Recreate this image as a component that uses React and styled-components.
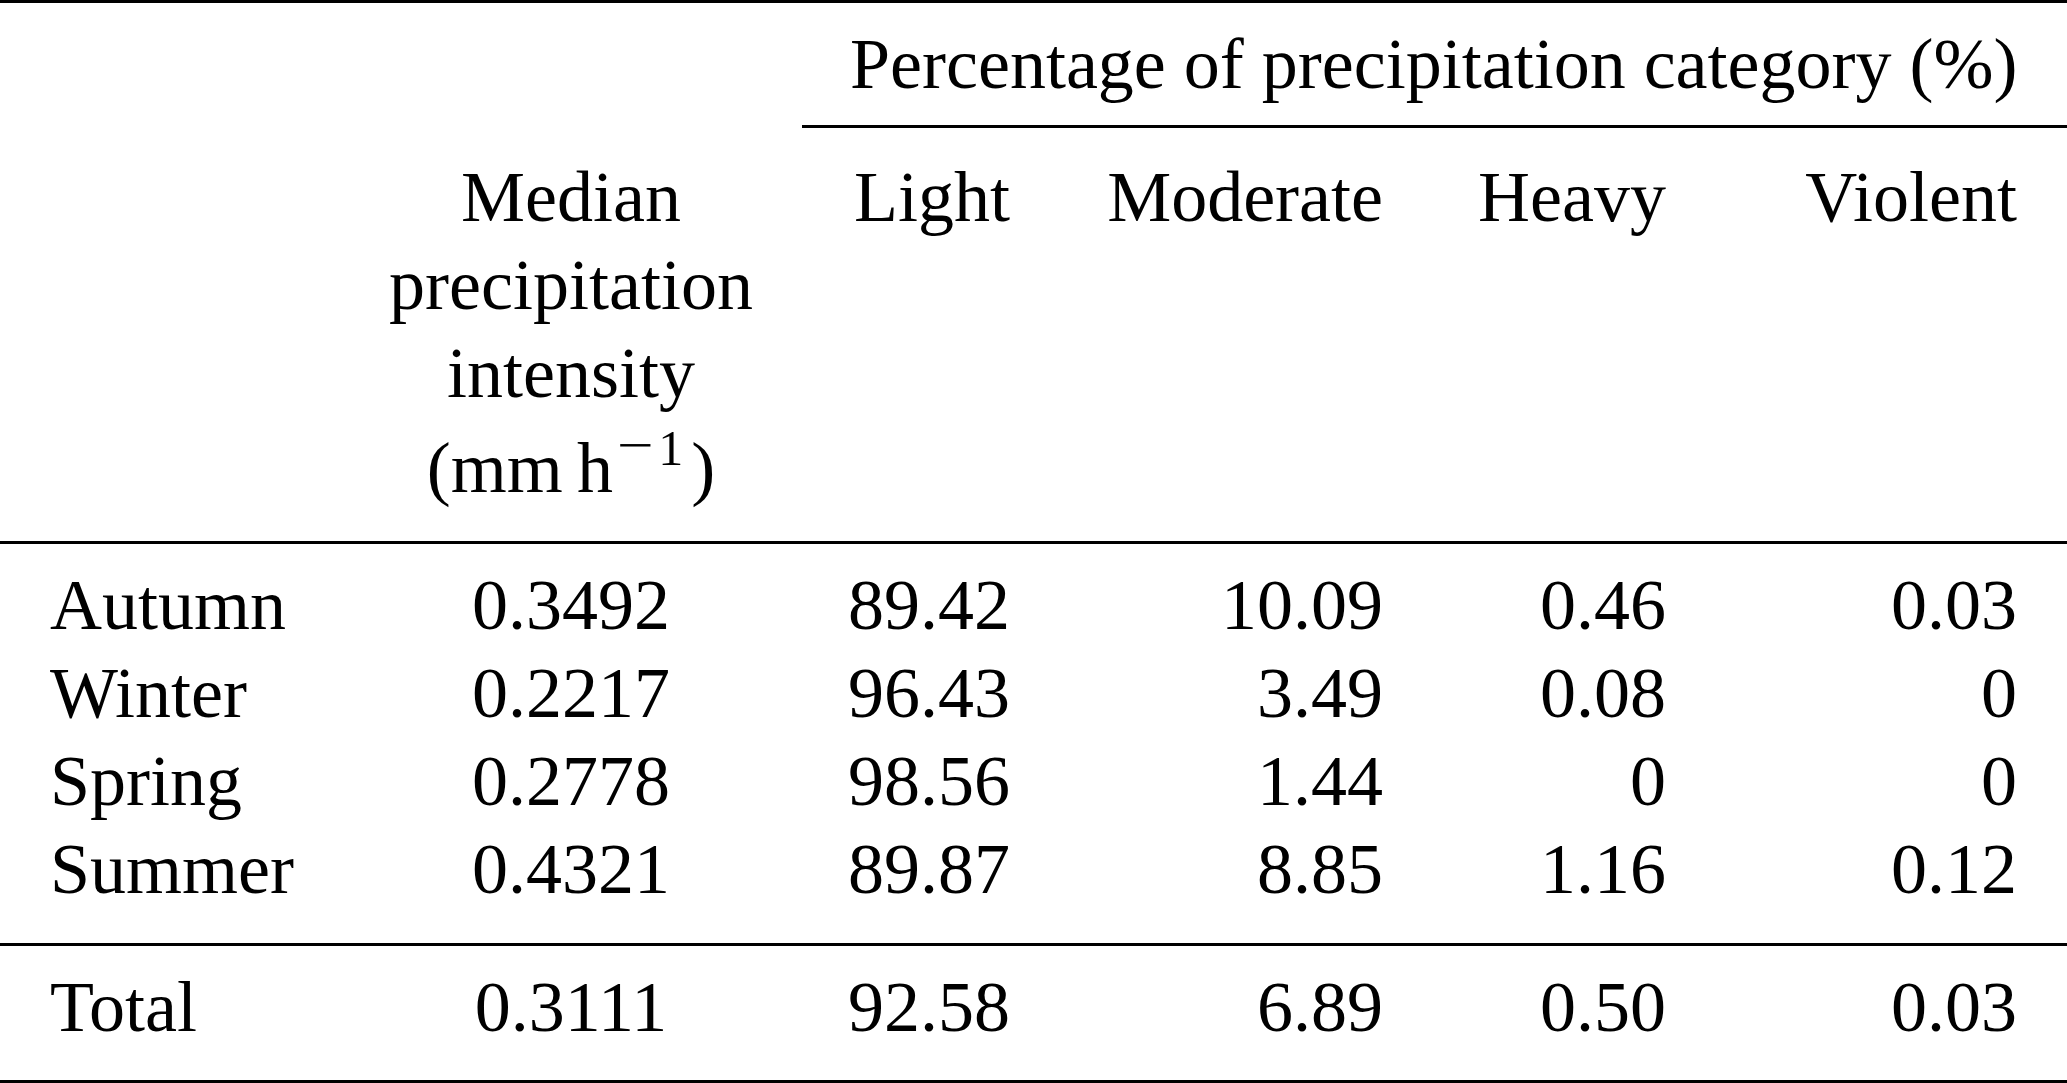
import React from 'react';
import styled, { createGlobalStyle, css } from 'styled-components';

const GlobalStyle = createGlobalStyle`
  html, body {
    margin: 0;
    padding: 0;
    background: #fff;
  }
  body {
    font-family: "Liberation Serif", "Times New Roman", serif;
    color: #000;
  }
`;

const RULE = '3px solid #000';

const Table = styled.table`
  width: 2067px;
  table-layout: fixed;
  border-collapse: separate;
  border-spacing: 0;
  border-top: ${RULE};
  border-bottom: ${RULE};
  font-size: 72px;
  line-height: 88px;
`;

const Col = styled.col`
  width: ${(p) => p.$w}px;
`;

// each row carries its own vertical padding and optional rule underneath
const Row = styled.tr`
  & > th,
  & > td {
    ${(p) => (p.$top ? css`padding-top: ${p.$top}px;` : '')}
    ${(p) => (p.$bottom ? css`padding-bottom: ${p.$bottom}px;` : '')}
    ${(p) => (p.$rule ? css`border-bottom: ${RULE};` : '')}
  }
`;

const Cell = styled.td`
  font-weight: 400;
  white-space: nowrap;
  vertical-align: top;
  padding: 0;
  padding-left: ${(p) => (p.$align === 'left' ? '50px' : '0')};
  padding-right: ${(p) => (p.$align === 'right' ? '50px' : '0')};
  text-align: ${(p) => p.$align || 'center'};
`;

const SpanCell = styled.th`
  font-weight: 400;
  white-space: nowrap;
  text-align: center;
  padding: 17px 50px 17px 48px;
  border-bottom: ${RULE};
`;

const HeadLine = styled.span`
  display: block;
`;

const UnitLine = styled(HeadLine)`
  padding-top: 7px;
`;

const Sup = styled.span`
  font-size: 50px;
  line-height: 0;
  vertical-align: 27px;
  margin-left: 3px;
  margin-right: 8px;
`;

// TeX minus is wider and sits higher than the font's own
const Minus = styled.span`
  display: inline-block;
  transform: scaleX(1.3) translateY(-3px);
  margin: 0 9px 0 5px;
`;

const rows = [
  ['Autumn', '0.3492', '89.42', '10.09', '0.46', '0.03'],
  ['Winter', '0.2217', '96.43', '3.49', '0.08', '0'],
  ['Spring', '0.2778', '98.56', '1.44', '0', '0'],
  ['Summer', '0.4321', '89.87', '8.85', '1.16', '0.12'],
];

const total = ['Total', '0.3111', '92.58', '6.89', '0.50', '0.03'];

const DataCells = ({ values }) => (
  <>
    <Cell $align="left">{values[0]}</Cell>
    <Cell>{values[1]}</Cell>
    {values.slice(2).map((v, i) => (
      <Cell key={i} $align="right">
        {v}
      </Cell>
    ))}
  </>
);

export default function App() {
  return (
    <>
      <GlobalStyle />
      <Table>
        <colgroup>
          <Col $w={340} />
          <Col $w={462} />
          <Col $w={258} />
          <Col $w={373} />
          <Col $w={283} />
          <Col $w={351} />
        </colgroup>
        <thead>
          <Row>
            <Cell />
            <Cell />
            <SpanCell colSpan={4}>Percentage of precipitation category (%)</SpanCell>
          </Row>
          <Row $top={25} $bottom={29} $rule>
            <Cell as="th" />
            <Cell as="th">
              <HeadLine>Median</HeadLine>
              <HeadLine>precipitation</HeadLine>
              <HeadLine>intensity</HeadLine>
              <UnitLine>
                (mm{'\u2009'}h
                <Sup>
                  <Minus>−</Minus>1
                </Sup>
                )
              </UnitLine>
            </Cell>
            <Cell as="th" $align="right">Light</Cell>
            <Cell as="th" $align="right">Moderate</Cell>
            <Cell as="th" $align="right">Heavy</Cell>
            <Cell as="th" $align="right">Violent</Cell>
          </Row>
        </thead>
        <tbody>
          {rows.map((r, i) => (
            <Row
              key={r[0]}
              $top={i === 0 ? 17 : 0}
              $bottom={i === rows.length - 1 ? 30 : 0}
              $rule={i === rows.length - 1}
            >
              <DataCells values={r} />
            </Row>
          ))}
          <Row $top={17} $bottom={29}>
            <DataCells values={total} />
          </Row>
        </tbody>
      </Table>
    </>
  );
}
